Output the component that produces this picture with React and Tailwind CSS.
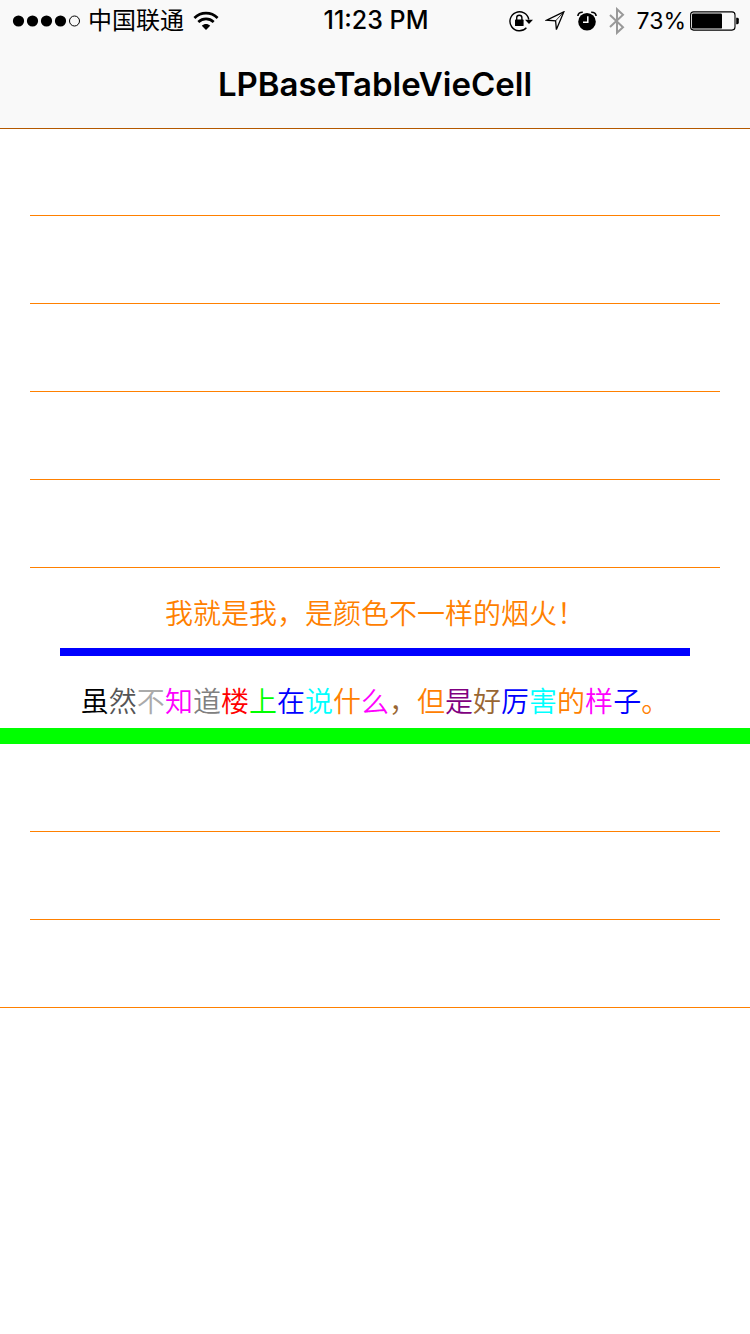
const LATIN = "font-[Inter,'Noto_Sans_CJK_SC',sans-serif]";

function Signal() {
  return (
    <svg width="69" height="14" viewBox="0 0 69 14" aria-label="Signal">
      {[7, 21, 35, 49].map((x) => (
        <circle key={x} cx={x - 0.5} cy="7" r="5.6" />
      ))}
      <circle cx="62.5" cy="7" r="5" fill="none" stroke="black" />
    </svg>
  );
}

function Wifi() {
  return (
    <svg width="26" height="20" viewBox="0 0 26 20" fill="none" stroke="black" strokeWidth="2.7" aria-label="Wi-Fi">
      <path d="M1.4 7C8 .6 18 .6 24.6 7" />
      <path d="M5.3 11C9.8 6.9 16.2 6.9 20.7 11" />
      <path d="M13 19 8.8 14.8C11.2 12.3 14.8 12.3 17.2 14.8Z" fill="black" stroke="none" />
    </svg>
  );
}

function RotationLock() {
  return (
    <svg width="24" height="22" viewBox="0 0 24 22" aria-label="Rotation lock">
      <path d="M17.4 17.8A9.5 9.5 0 1 1 19.8 9.5" fill="none" stroke="black" strokeWidth="1.4" />
      <path d="M16 9.8H24L20 14Z" />
      <rect x="6" y="9.6" width="8.6" height="6.4" rx="0.6" />
      <path d="M7.7 10V7.8a2.6 2.6 0 0 1 5.2 0V10" fill="none" stroke="black" strokeWidth="1.4" />
    </svg>
  );
}

function Location() {
  return (
    <svg width="20" height="20" viewBox="0 0 20 20" fill="none" stroke="black" strokeWidth="1.3" aria-label="Location">
      <path d="M18.8 .9 1.6 9.2 10.6 9.8 11.4 18.6Z" strokeLinejoin="miter" />
      <path d="M18.8 .9 10.6 9.8" strokeWidth="0.8" />
    </svg>
  );
}

function Alarm() {
  return (
    <svg width="20" height="20" viewBox="0 0 20 20" aria-label="Alarm">
      <circle cx="10" cy="10.7" r="8.8" />
      <path d="M10.8 5.2V11.2H6" fill="none" stroke="white" strokeWidth="1.5" />
      <path d="M.9 5C1 2.8 3 1.1 5.8 1.2M19.1 5C19 2.8 17 1.1 14.2 1.2" fill="none" stroke="black" strokeWidth="1.6" />
    </svg>
  );
}

function Bluetooth() {
  return (
    <svg width="16" height="28" viewBox="0 0 16 28" fill="none" stroke="#999" strokeWidth="2" aria-label="Bluetooth">
      <path d="M1 8 14 20.2 8 25.8V2.2L14 7.8 1 20" />
    </svg>
  );
}

function Battery() {
  return (
    <svg width="50" height="20" viewBox="0 0 50 20" aria-label="Battery">
      <rect x="0.6" y="0.9" width="44.4" height="18.2" rx="3" fill="none" stroke="black" strokeWidth="1.1" />
      <rect x="2" y="2.4" width="30" height="15.2" rx="1.2" />
      <path d="M46.2 6.8h1.2q1.4 0 1.4 1.4v3.6q0 1.4-1.4 1.4h-1.2z" />
    </svg>
  );
}

function StatusBar() {
  return (
    <div className="grid h-[42px] grid-cols-[1fr_auto_1fr] items-center pr-2.5 pl-3 text-2xl">
      <div className="flex items-center">
        <Signal />
        <span className="ml-[7px]">中国联通</span>
        <span className="ml-[9px]"><Wifi /></span>
      </div>
      <time className="text-[25px] font-medium">11:23 PM</time>
      <div className="flex items-center justify-end">
        <RotationLock />
        <span className="ml-3"><Location /></span>
        <span className="ml-3"><Alarm /></span>
        <span className="ml-3"><Bluetooth /></span>
        <span className="ml-3 text-[23px]">73%</span>
        <span className="ml-1"><Battery /></span>
      </div>
    </div>
  );
}

const colored = [
  ["虽", "text-black"],
  ["然", "text-[#555555]"],
  ["不", "text-[#aaaaaa]"],
  ["知", "text-[#ff00ff]"],
  ["道", "text-[#808080]"],
  ["楼", "text-[#ff0000]"],
  ["上", "text-[#00ff00]"],
  ["在", "text-[#0000ff]"],
  ["说", "text-[#00ffff]"],
  ["什", "text-[#ff8000]"],
  ["么", "text-[#ff00ff]"],
  ["\uff0c", "text-[#996633]"],
  ["但", "text-[#ff8000]"],
  ["是", "text-[#800080]"],
  ["好", "text-[#996633]"],
  ["厉", "text-[#0000ff]"],
  ["害", "text-[#00ffff]"],
  ["的", "text-[#ff8000]"],
  ["样", "text-[#ff00ff]"],
  ["子", "text-[#0000ff]"],
  ["。", "text-[#ff8000]"],
];

function Row({ inset = "mx-[30px]", line = "h-px bg-[#ff8000]", pad = "", children }) {
  return (
    <li className={`flex h-[88px] flex-col ${pad}`}>
      <div className="flex flex-1 items-center justify-center">{children}</div>
      <div className={`${inset} ${line}`} />
    </li>
  );
}

const textClass = "text-[28px] leading-10 font-[350] whitespace-nowrap font-['Noto_Sans_CJK_SC',sans-serif]";

export default function App() {
  return (
    <div className={`min-h-screen bg-white text-black ${LATIN}`} lang="zh-CN">
      <header className="border-b border-[#b35900] bg-[#f9f9f9]">
        <StatusBar />
        <h1 className="flex h-[86px] items-center justify-center text-[33px] font-semibold">LPBaseTableVieCell</h1>
      </header>
      <main>
        <ul>
          <li className="flex h-[87px] flex-col justify-end">
            <div className="mx-[30px] h-px bg-[#ff8000]" />
          </li>
          <Row />
          <Row />
          <Row />
          <Row />
          <Row inset="mx-[60px]" line="h-2 bg-[#0000ff]" pad="pt-2">
            <p className={`${textClass} text-[#ff8000]`}>{"我就是我\uff0c是颜色不一样的烟火\uff01"}</p>
          </Row>
          <Row inset="mx-0" line="h-4 bg-[#00ff00]" pad="pt-4">
            <p className={textClass}>
              {colored.map(([char, color], i) => (
                <span key={i} className={color}>{char}</span>
              ))}
            </p>
          </Row>
          <Row />
          <Row />
          <Row inset="mx-0" />
        </ul>
      </main>
    </div>
  );
}
